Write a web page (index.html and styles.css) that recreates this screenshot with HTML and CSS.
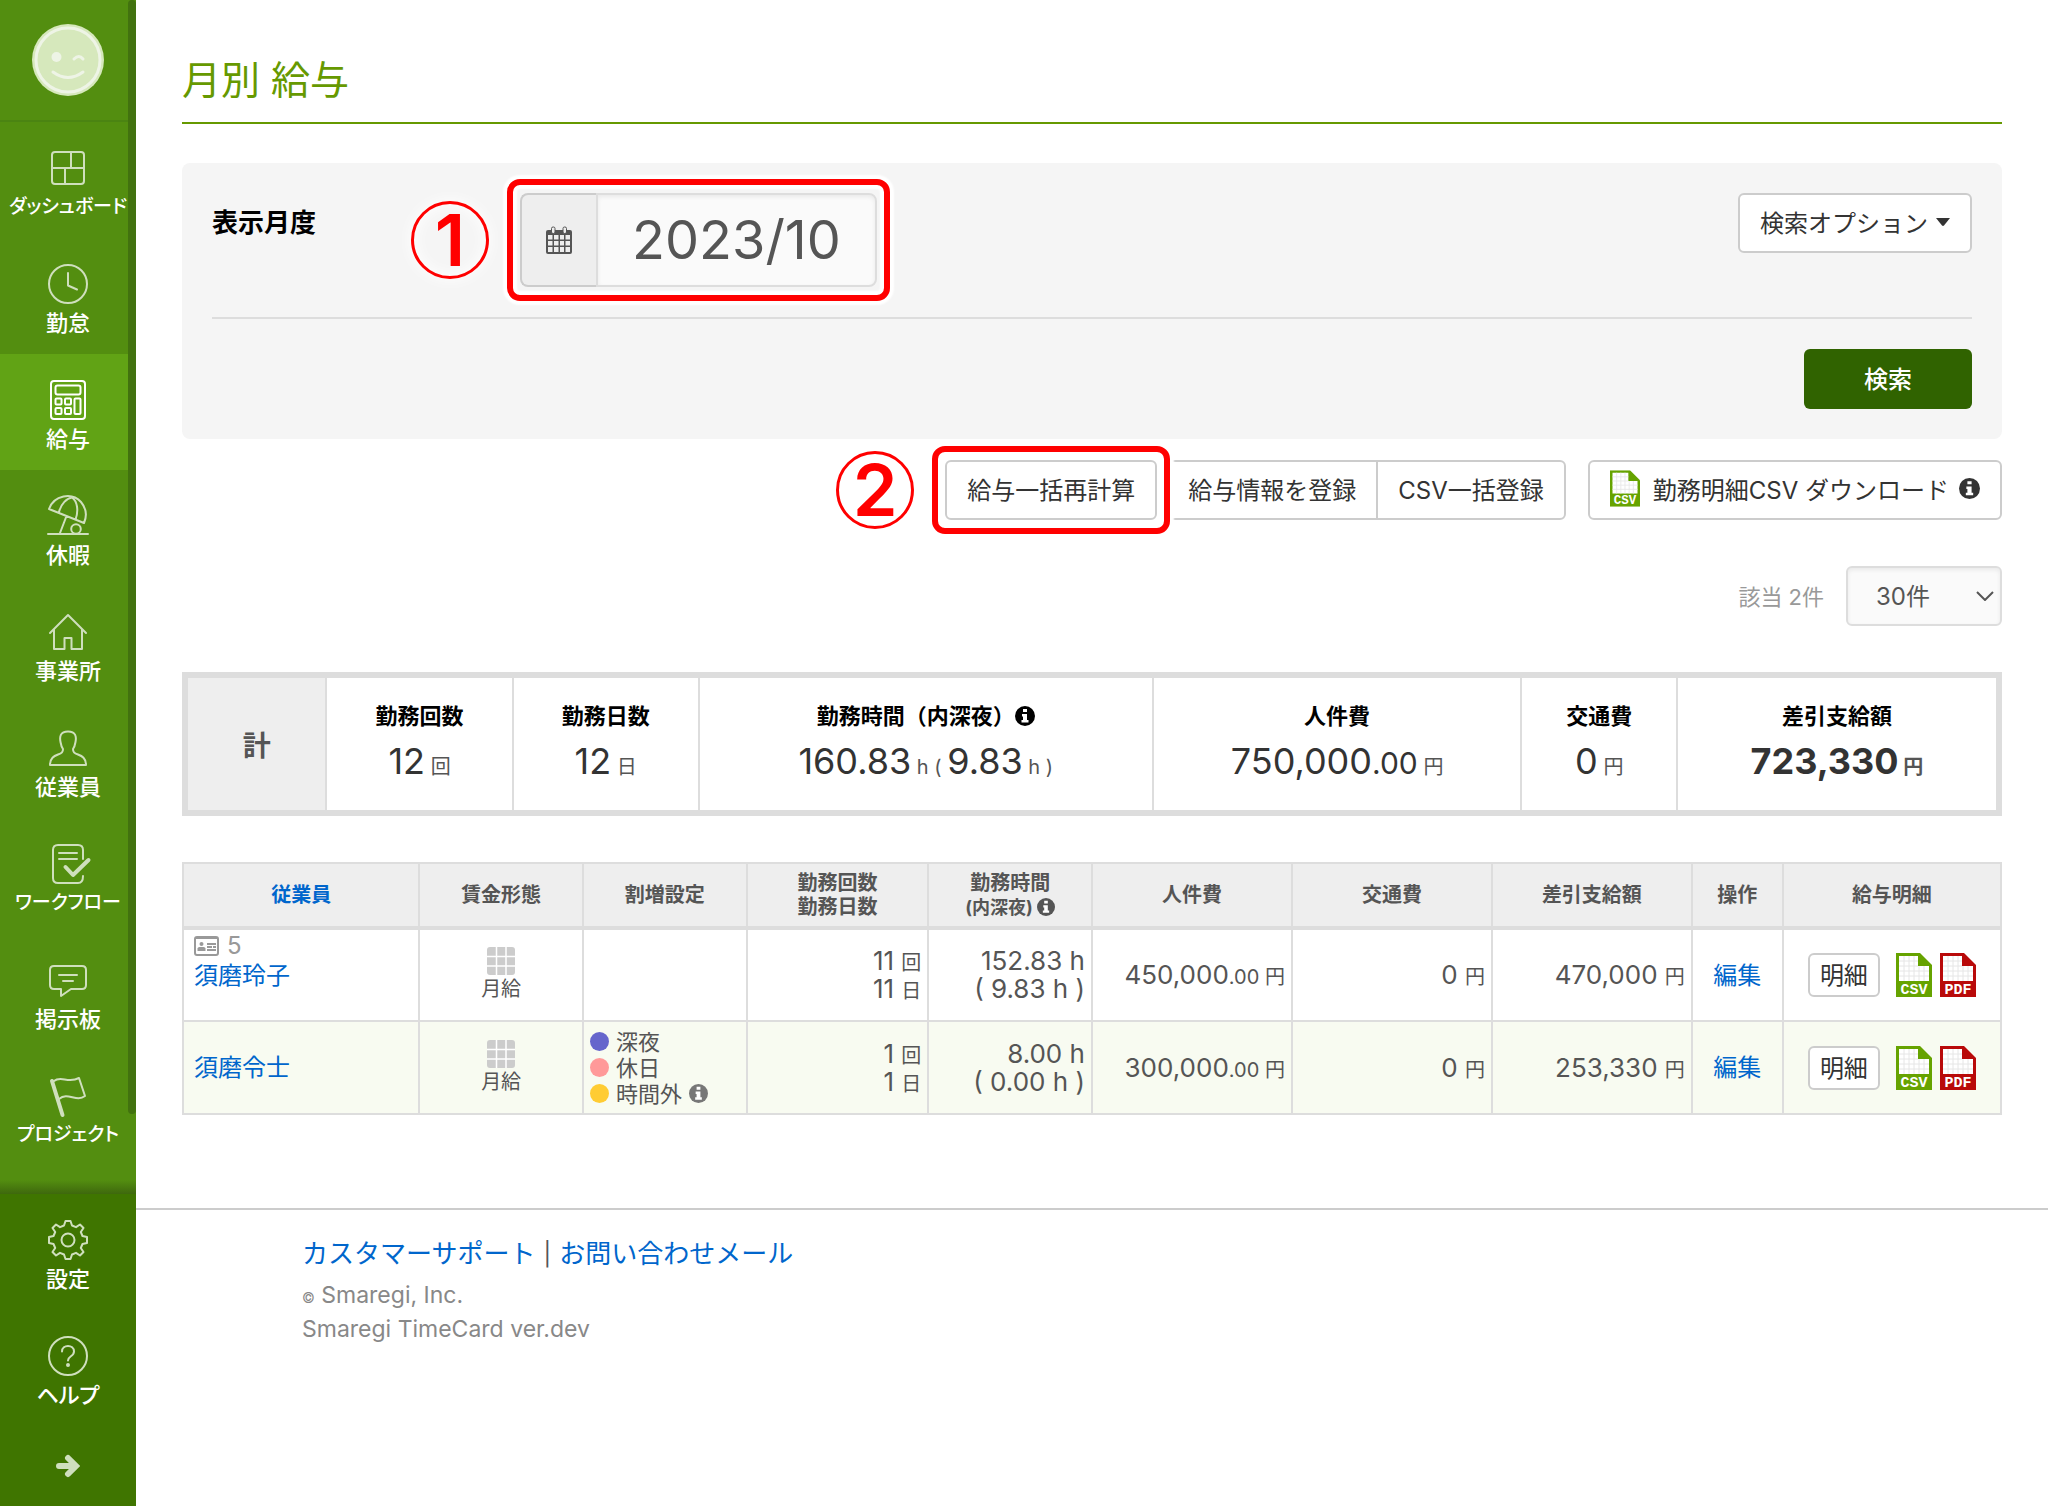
FILE: index.html
```html
<!DOCTYPE html>
<html lang="ja">
<head>
  <meta charset="UTF-8" />
  <meta name="viewport" content="width=device-width, initial-scale=1.0" />
  <title>月別 給与</title>
  <link rel="stylesheet" href="styles.css">
</head>
<body>
  <!-- shared icons -->
  <svg class="sprite" aria-hidden="true">
    <symbol id="icon-info" viewBox="0 0 20 20">
      <circle cx="10" cy="10" r="10" fill="currentColor" />
      <path d="M8 3h4v3H8zM7 8h5v6h1.500v2.500h-7V14H8v-3.500H7z" fill="#fff" />
    </symbol>
    <symbol id="icon-csv" viewBox="0 0 36 44">
      <path d="M0 0h24l12 12v32H0z" fill="#66a300" />
      <path d="M3 3h19v10h11v15H3z" fill="#fff" />
      <path d="M8 3v25M13 3v25M18 3v25M23 13v15M28 13v15M3 8h19M3 13h19M3 18h30M3 23h30" stroke="#e6e6e6" fill="none" />
      <text x="18" y="41" text-anchor="middle" class="file-text">CSV</text>
    </symbol>
    <symbol id="icon-pdf" viewBox="0 0 36 44">
      <path d="M0 0h24l12 12v32H0z" fill="#b90a0a" />
      <path d="M3 3h19v10h11v15H3z" fill="#fff" />
      <path d="M8 3v25M13 3v25M18 3v25M23 13v15M28 13v15M3 8h19M3 13h19M3 18h30M3 23h30" stroke="#e6e6e6" fill="none" />
      <text x="18" y="41" text-anchor="middle" class="file-text">PDF</text>
    </symbol>
    <symbol id="icon-month" viewBox="0 0 28 28">
      <rect width="28" height="28" rx="3" fill="#ccc" />
      <path d="M9.500 0v28M19 0v28M0 9.500h28M0 19h28" stroke="#fff" stroke-width="1.500" />
    </symbol>
  </svg>

  <div class="layout">
    <aside class="sidebar">
      <div class="side-main">
        <a href="#" class="user" aria-label="ユーザー">
          <svg width="72" height="72" viewBox="0 0 72 72">
            <circle cx="36" cy="36" r="36" fill="#d6e8bc" />
            <g fill="none" stroke="#eef4e6" stroke-width="3" stroke-linecap="round">
              <circle cx="36" cy="36" r="32" />
              <path d="M42 35q5-5 9 0M21 48q15 11 30 0" />
            </g>
            <circle cx="24.500" cy="33" r="5" fill="#eef4e6" />
          </svg>
        </a>
        <nav>
          <a href="#" class="nav-item long">
            <svg class="nav-icon" viewBox="0 0 40 40"><rect x="4" y="4" width="32" height="32" rx="3" /><path d="M4 20h32M23 4v16M17 20v16" /></svg>
            <span>ダッシュボード</span>
          </a>
          <a href="#" class="nav-item">
            <svg class="nav-icon" viewBox="0 0 40 40"><circle cx="20" cy="20" r="19" /><path d="M20 9v12.500l9 4" /></svg>
            <span>勤怠</span>
          </a>
          <a href="#" class="nav-item active">
            <svg class="nav-icon" viewBox="0 0 40 40"><rect x="3" y="1" width="34" height="38" rx="3" /><rect x="7.500" y="5.500" width="25" height="9" rx="2" /><rect x="7.500" y="18.500" width="6" height="6" rx="1" /><rect x="17" y="18.500" width="6" height="6" rx="1" /><rect x="7.500" y="28" width="6" height="6" rx="1" /><rect x="17" y="28" width="6" height="6" rx="1" /><rect x="26.500" y="18.500" width="6" height="15.500" rx="1" /></svg>
            <span>給与</span>
          </a>
          <a href="#" class="nav-item">
            <svg class="nav-icon" viewBox="0 0 40 40"><path d="M1 13C6-1 24-4 33 6c5 6 6 14 3 21zM11 16C13 8 19 2 24 1.500M27.500 23.500C31 14 29 5 24 1.500M18.500 20L12 37M0 38h40" /><circle cx="28" cy="33" r="4.800" /></svg>
            <span>休暇</span>
          </a>
          <a href="#" class="nav-item">
            <svg class="nav-icon" viewBox="0 0 40 40"><path d="M2 21L20 3l18 18M6 17.500V37h10.500V26h7v11H34V17.500" /></svg>
            <span>事業所</span>
          </a>
          <a href="#" class="nav-item">
            <svg class="nav-icon" viewBox="0 0 40 40"><path d="M2 37c0-7 4-9 8-10.500 4-1.500 5-2.500 5-5.500-1.500-2-2-4-2.500-7C11.500 9 12 3.500 20 3.500S28.500 9 27.500 14c-.5 3-1 5-2.500 7 0 3 1 4 5 5.500 4 1.500 8 3.500 8 10.500z" /></svg>
            <span>従業員</span>
          </a>
          <a href="#" class="nav-item long">
            <svg class="nav-icon" viewBox="0 0 40 40"><path d="M35 15V6q0-5-5-5H10Q5 1 5 6v28q0 5 5 5h20q5 0 5-7M11 9h18M11 15h18" /><path d="M17.500 23l7.500 8 15.500-15" stroke-width="4" /></svg>
            <span>ワークフロー</span>
          </a>
          <a href="#" class="nav-item">
            <svg class="nav-icon" viewBox="0 0 40 40"><path d="M6 6h28q4 0 4 4v15q0 4-4 4H23l-10 7v-7H6q-4 0-4-4V10q0-4 4-4zM11 15h18M15 21h10" /></svg>
            <span>掲示板</span>
          </a>
          <a href="#" class="nav-item long">
            <svg class="nav-icon" viewBox="0 0 40 40"><path d="M6 5c7-6 14 3 25-3l6 18c-9 7-17-5-26 3" /><path d="M4 5l10.500 34" stroke-width="4" /></svg>
            <span>プロジェクト</span>
          </a>
        </nav>
        <div class="side-scroll"></div>
      </div>
      <div class="side-bottom">
        <a href="#" class="nav-item">
          <svg class="nav-icon" viewBox="0 0 40 40"><path d="M17.500 1h5L24 5.500l4 1.700 4-2.700 3.500 3.500-2.700 4 1.700 4 4.500 1v6l-4.500 1-1.700 4 2.700 4-3.500 3.500-4-2.700-4 1.700-1.500 4.500h-5L16 34.500l-4-1.700-4 2.700L4.500 32l2.700-4-1.700-4L1 23v-6l4.500-1 1.700-4-2.700-4L8 4.500l4 2.700 4-1.700z" /><circle cx="20" cy="20" r="6.500" /></svg>
          <span>設定</span>
        </a>
        <a href="#" class="nav-item">
          <svg class="nav-icon" viewBox="0 0 40 40"><circle cx="20" cy="20" r="19" /><path d="M14 15.500c0-7.500 12-7.500 12 0 0 5-6 4.500-6 9" /><circle cx="20" cy="29" r="1" /></svg>
          <span>ヘルプ</span>
        </a>
        <button type="button" class="side-toggle" aria-label="メニューを開く">
          <svg width="24" height="24" viewBox="0 0 24 24"><path d="M3 12h16M12 4l8 8-8 8" /></svg>
        </button>
      </div>
    </aside>

    <div class="content">
      <main>
        <h1>月別 給与</h1>

        <form class="search">
          <div class="search-row">
            <label for="month">表示月度</label>
            <div class="month-picker">
              <span class="month-icon">
                <svg width="26" height="28" viewBox="0 0 26 28">
                  <rect x="0" y="4" width="26" height="24" rx="2" fill="#555" />
                  <path d="M2 9h4.500v4.500H2zM8 9h4.500v4.500H8zM14 9h4v4.500h-4zM19.500 9H24v4.500h-4.500zM2 15h4.500v4.500H2zM8 15h4.500v4.500H8zM14 15h4v4.500h-4zM19.500 15H24v4.500h-4.500zM2 21h4.500v5H2zM8 21h4.500v5H8zM14 21h4v5h-4zM19.500 21H24v5h-4.500z" fill="#eee" />
                  <rect x="5.500" y="1" width="3.500" height="6.500" rx="1.500" fill="#eee" stroke="#555" />
                  <rect x="17" y="1" width="3.500" height="6.500" rx="1.500" fill="#eee" stroke="#555" />
                </svg>
              </span>
              <input type="text" id="month" value="2023/10">
              <span class="mark-frame"></span>
              <span class="mark-number">1</span>
            </div>
            <button type="button" class="btn option">検索オプション
              <svg width="14" height="8" viewBox="0 0 14 8"><path d="M0 0h14L8 7.500q-1 .8-2 0z" fill="currentColor" /></svg>
            </button>
          </div>
          <div class="search-submit">
            <button type="button" class="btn primary">検索</button>
          </div>
        </form>

        <div class="toolbar">
          <div class="recalc">
            <button type="button" class="btn">給与一括再計算</button>
            <span class="mark-frame"></span>
            <span class="mark-number">2</span>
          </div>
          <div class="btn-group">
            <button type="button" class="btn">給与情報を登録</button>
            <button type="button" class="btn">CSV一括登録</button>
          </div>
          <button type="button" class="btn download">
            <svg width="30" height="37" viewBox="0 0 36 44"><use href="#icon-csv" /></svg>
            <span>勤務明細CSV ダウンロード</span>
            <svg width="21" height="21"><use href="#icon-info" /></svg>
          </button>
        </div>

        <div class="paging">
          <label for="per-page">該当 2件</label>
          <div class="select-box">
            <select id="per-page">
              <option>30件</option>
              <option>50件</option>
              <option>100件</option>
            </select>
            <svg width="18" height="10" viewBox="0 0 18 10"><path d="M1 1l8 8 8-8" fill="none" stroke="#555" stroke-width="2" /></svg>
          </div>
        </div>

        <table class="summary">
          <tr>
            <th class="s-total">計</th>
            <td class="s-count"><div class="s-label">勤務回数</div><div class="s-value">12<small> 回</small></div></td>
            <td class="s-count"><div class="s-label">勤務日数</div><div class="s-value">12<small> 日</small></div></td>
            <td class="s-hours"><div class="s-label">勤務時間（内深夜）<svg class="info" width="20" height="20"><use href="#icon-info" /></svg></div><div class="s-value">160.83<small> h ( </small>9.83<small> h )</small></div></td>
            <td class="s-cost"><div class="s-label">人件費</div><div class="s-value">750,000<span class="decimal">.00</span><small> 円</small></div></td>
            <td class="s-fare"><div class="s-label">交通費</div><div class="s-value">0<small> 円</small></div></td>
            <td class="s-pay"><div class="s-label">差引支給額</div><div class="s-value strong">723,330<small> 円</small></div></td>
          </tr>
        </table>

        <table class="list">
          <thead>
            <tr>
              <th class="c-name"><a href="#">従業員</a></th>
              <th class="c-type">賃金形態</th>
              <th class="c-type">割増設定</th>
              <th class="c-count">勤務回数<br>勤務日数</th>
              <th class="c-type">勤務時間<br><small>(内深夜) <svg class="info" width="18" height="18"><use href="#icon-info" /></svg></small></th>
              <th class="c-money">人件費</th>
              <th class="c-money">交通費</th>
              <th class="c-money">差引支給額</th>
              <th class="c-edit">操作</th>
              <th class="c-detail">給与明細</th>
            </tr>
          </thead>
          <tbody>
            <tr>
              <td class="name with-id">
                <div class="emp-id">
                  <svg width="25" height="20" viewBox="0 0 25 20"><rect x="1" y="1" width="23" height="18" rx="2" fill="none" stroke="#999" stroke-width="2" /><path d="M1 2h23M13 8h9M13 11h5M19 11h3M13 14h9" stroke="#999" stroke-width="2" /><circle cx="7.500" cy="8" r="2" fill="#999" /><path d="M3.500 15v-2.500q0-1.500 2-1.500h4q2 0 2 1.500V15z" fill="#999" /></svg>
                  5
                </div>
                <a href="#">須磨玲子</a>
              </td>
              <td class="type"><svg width="28" height="28"><use href="#icon-month" /></svg>月給</td>
              <td></td>
              <td class="num">11 <small>回</small><br>11 <small>日</small></td>
              <td class="num">152.83 h<br>( 9.83 h )</td>
              <td class="num">450,000<small>.00 円</small></td>
              <td class="num">0 <small>円</small></td>
              <td class="num">470,000 <small>円</small></td>
              <td class="edit"><a href="#">編集</a></td>
              <td>
                <div class="detail">
                  <button type="button" class="btn small">明細</button>
                  <a href="#" aria-label="CSV"><svg width="36" height="44"><use href="#icon-csv" /></svg></a>
                  <a href="#" aria-label="PDF"><svg width="36" height="44"><use href="#icon-pdf" /></svg></a>
                </div>
              </td>
            </tr>
            <tr>
              <td class="name"><a href="#">須磨令士</a></td>
              <td class="type"><svg width="28" height="28"><use href="#icon-month" /></svg>月給</td>
              <td>
                <ul class="extras">
                  <li><span class="dot night"></span>深夜</li>
                  <li><span class="dot holiday"></span>休日</li>
                  <li><span class="dot overtime"></span>時間外<svg width="19" height="19"><use href="#icon-info" /></svg></li>
                </ul>
              </td>
              <td class="num">1 <small>回</small><br>1 <small>日</small></td>
              <td class="num">8.00 h<br>( 0.00 h )</td>
              <td class="num">300,000<small>.00 円</small></td>
              <td class="num">0 <small>円</small></td>
              <td class="num">253,330 <small>円</small></td>
              <td class="edit"><a href="#">編集</a></td>
              <td>
                <div class="detail">
                  <button type="button" class="btn small">明細</button>
                  <a href="#" aria-label="CSV"><svg width="36" height="44"><use href="#icon-csv" /></svg></a>
                  <a href="#" aria-label="PDF"><svg width="36" height="44"><use href="#icon-pdf" /></svg></a>
                </div>
              </td>
            </tr>
          </tbody>
        </table>
      </main>

      <footer>
        <div class="footer-links"><a href="#">カスタマーサポート</a><span>|</span><a href="#">お問い合わせメール</a></div>
        <p><small>©</small> Smaregi, Inc.</p>
        <p>Smaregi TimeCard ver.dev</p>
      </footer>
    </div>
  </div>
</body>
</html>
```
FILE: styles.css
```css
* {
  box-sizing: border-box;
}
body {
  margin: 0;
  font-family: Inter, "Noto Sans CJK JP", sans-serif;
  font-size: 24px;
  color: #555;
  background: #fff;
}
button, input, select {
  font: inherit;
  margin: 0;
}
a {
  color: #0066cc;
  text-decoration: none;
}
svg {
  flex-shrink: 0;
}
.sprite {
  display: none;
}
.file-text {
  font: bold 15px "Liberation Mono", monospace;
  fill: #fff;
}
.layout {
  display: flex;
  min-height: 100vh;
}

/* sidebar */
.sidebar {
  position: sticky;
  top: 0;
  flex: 0 0 136px;
  min-width: 0;
  height: 100vh;
  display: flex;
  flex-direction: column;
  background: #538e10;
}
.side-main {
  position: relative;
  flex: 1;
  min-height: 0;
  overflow: hidden;
}
.side-main::after {
  content: "";
  position: absolute;
  left: 0;
  right: 0;
  bottom: 0;
  height: 14px;
  background: linear-gradient(rgba(62, 104, 13, 0), #3e680d);
}
.user {
  display: flex;
  align-items: center;
  justify-content: center;
  height: 122px;
  border-bottom: 2px solid #4b8412;
}
.nav-item {
  display: flex;
  flex-direction: column;
  align-items: center;
  gap: 4px;
  height: 116px;
  padding-top: 26px;
  color: #fff;
  font-size: 22px;
  font-weight: 500;
  line-height: 30px;
  white-space: nowrap;
  font-feature-settings: "palt";
}
.nav-item.long {
  font-size: 19px;
}
.nav-item.active {
  background: #61a315;
}
.nav-icon {
  width: 40px;
  height: 40px;
  overflow: visible;
  fill: none;
  stroke: #cfdfbd;
  stroke-width: 2;
  stroke-linecap: round;
  stroke-linejoin: round;
}
.active .nav-icon {
  stroke: #fff;
}
.side-scroll {
  position: absolute;
  top: 0;
  right: 0;
  bottom: 80px;
  width: 8px;
  border-radius: 4px;
  background: #42720f;
}
.side-bottom {
  background: #3f7500;
}
.side-toggle {
  display: flex;
  align-items: center;
  justify-content: center;
  width: 100%;
  height: 80px;
  border: 0;
  background: none;
}
.side-toggle path {
  fill: none;
  stroke: #cfdfbd;
  stroke-width: 6;
  stroke-linecap: round;
}

/* page */
.content {
  flex: 1;
  min-width: 0;
}
main {
  padding: 52px 46px 0;
}
h1 {
  margin: 0 0 39px;
  padding-bottom: 14px;
  border-bottom: 2px solid #669900;
  color: #669900;
  font-size: 39px;
  font-weight: 400;
  line-height: 56px;
}
.btn {
  height: 60px;
  padding: 0 20px 3px;
  border: 2px solid #ccc;
  border-radius: 6px;
  background: #fff;
  color: #333;
  white-space: nowrap;
}
.btn.primary {
  width: 168px;
  border: 0;
  background: #306300;
  color: #fff;
  font-weight: 500;
}
.btn.small {
  height: 44px;
  padding: 0 10px 3px;
}

/* search panel */
.search {
  padding: 30px;
  border-radius: 8px;
  background: #f5f5f5;
}
.search-row {
  display: flex;
  align-items: flex-start;
  padding-bottom: 30px;
  border-bottom: 2px solid #ddd;
}
.search-row label {
  width: 308px;
  color: #000;
  font-size: 26px;
  font-weight: bold;
  line-height: 60px;
}
.month-picker {
  position: relative;
  display: flex;
  width: 357px;
  height: 94px;
}
.month-icon {
  display: flex;
  align-items: center;
  justify-content: center;
  width: 76px;
  border: 2px solid #ccc;
  border-right: 0;
  border-radius: 8px 0 0 8px;
  background: #eee;
}
.month-picker input {
  flex: 1;
  min-width: 0;
  padding: 0 0 2px;
  border: 2px solid #ddd;
  border-radius: 0 8px 8px 0;
  background: #fafafa;
  box-shadow: inset 0 2px 4px rgba(0, 0, 0, 0.07);
  color: #555;
  font-size: 54px;
  text-align: center;
}
.option {
  margin-left: auto;
  display: flex;
  align-items: center;
  gap: 8px;
}
.search-submit {
  display: flex;
  justify-content: flex-end;
  padding-top: 30px;
}

/* step marks */
.mark-frame {
  position: absolute;
  inset: -14px -13px;
  border: 6px solid #f00;
  border-radius: 13px;
  box-shadow: 0 0 2px 4px #fff, inset 0 0 2px 4px #fff;
  pointer-events: none;
}
.mark-number {
  position: absolute;
  top: 50%;
  right: calc(100% + 31px);
  transform: translateY(-50%);
  width: 78px;
  height: 78px;
  border: 3px solid #f00;
  border-radius: 50%;
  box-shadow: 0 0 16px #fff, inset 0 0 16px #fff;
  color: #f00;
  font-size: 72px;
  font-weight: 600;
  line-height: 72px;
  text-align: center;
}

/* toolbar */
.toolbar {
  display: flex;
  justify-content: flex-end;
  margin-top: 21px;
}
.recalc {
  position: relative;
  z-index: 1;
  margin-right: 9px;
}
.btn-group {
  display: flex;
}
.btn-group .btn:first-child {
  border-radius: 0;
}
.btn-group .btn:last-child {
  margin-left: -2px;
  border-radius: 0 6px 6px 0;
}
.download {
  display: flex;
  align-items: center;
  margin-left: 22px;
}
.download span {
  margin: 0 10px 0 13px;
}
.paging {
  display: flex;
  align-items: center;
  justify-content: flex-end;
  gap: 22px;
  margin: 46px 0;
  color: #999;
  font-size: 22px;
}
.paging label {
  padding-bottom: 3px;
}
.select-box {
  position: relative;
}
.select-box select {
  width: 156px;
  height: 60px;
  padding: 0 28px;
  border: 2px solid #ddd;
  border-radius: 6px;
  background: #fafafa;
  box-shadow: inset 0 2px 4px rgba(0, 0, 0, 0.07);
  color: #555;
  font-size: 24px;
  appearance: none;
}
.select-box svg {
  position: absolute;
  top: 25px;
  right: 8px;
  pointer-events: none;
}

/* summary */
table {
  width: 100%;
  table-layout: fixed;
}
.summary {
  margin-bottom: 46px;
  border: 6px solid #ddd;
  border-spacing: 0;
}
.summary td, .summary th {
  height: 132px;
  padding: 0;
  text-align: center;
}
.summary th {
  background: #eee;
  font-size: 28px;
}
.summary td {
  padding-top: 3px;
  border-left: 2px solid #ddd;
}
.s-total { width: 7.6%; }
.s-count { width: 10.3%; }
.s-hours { width: 25.1%; }
.s-cost { width: 20.4%; }
.s-fare { width: 8.6%; }
.s-pay { width: 17.7%; }
.s-label {
  color: #000;
  font-size: 22px;
  font-weight: bold;
  line-height: 36px;
}
.s-value {
  color: #333;
  font-size: 36px;
  line-height: 54px;
}
.s-value small {
  color: #555;
  font-size: 20px;
}
.s-value .decimal {
  font-size: 30px;
}
.s-value.strong {
  font-weight: bold;
}
.info {
  vertical-align: -2px;
}

/* list */
.list {
  border-collapse: collapse;
}
.list th, .list td {
  border: 2px solid #ddd;
}
.list th {
  height: 65px;
  padding: 0;
  border-bottom-width: 4px;
  background: #eee;
  font-size: 20px;
  line-height: 24px;
}
.list th small {
  font-size: 18px;
}
.list td {
  height: 93px;
  padding: 0 6px;
}
.list tbody tr:nth-child(2) {
  background: #f8fbf1;
}
.c-name { width: 13%; }
.c-type { width: 9%; }
.c-count { width: 10%; }
.c-money { width: 11%; }
.c-edit { width: 5%; }
.c-detail { width: 12%; }
.list .name {
  padding: 0 10px;
  line-height: 36px;
}
.list .with-id {
  padding-top: 4px;
  vertical-align: top;
}
.emp-id {
  display: flex;
  align-items: center;
  gap: 8px;
  color: #999;
  line-height: 24px;
}
.type {
  text-align: center;
  font-size: 20px;
  line-height: 28px;
}
.type svg {
  display: block;
  margin: 0 auto;
}
.num {
  text-align: right;
  font-size: 26px;
  line-height: 28px;
  white-space: nowrap;
}
.num small {
  font-size: 20px;
  line-height: 20px;
}
.list .edit {
  padding-bottom: 4px;
  text-align: center;
}
.extras {
  margin: 0;
  padding: 0;
  list-style: none;
  font-size: 22px;
  line-height: 26px;
}
.extras li {
  display: flex;
  align-items: center;
  gap: 7px;
}
.extras svg {
  color: #777;
}
.dot {
  width: 19px;
  height: 19px;
  border-radius: 50%;
}
.night { background: #6666cc; }
.holiday { background: #ff9999; }
.overtime { background: #ffcc33; }
.detail {
  display: flex;
  align-items: center;
  justify-content: center;
  gap: 8px;
}
.detail .btn {
  margin-right: 8px;
}
.detail svg {
  display: block;
}

footer {
  margin-top: 93px;
  padding: 24px 166px;
  border-top: 2px solid #ccc;
  color: #888;
  font-size: 23px;
  line-height: 34px;
}
.footer-links {
  display: flex;
  gap: 8px;
  margin-bottom: 4px;
  color: #555;
  font-size: 26px;
  line-height: 40px;
}
.footer-links span {
  font-size: 23px;
}
footer p {
  margin: 0;
}
footer small {
  font-size: 14px;
  line-height: 14px;
}
```
